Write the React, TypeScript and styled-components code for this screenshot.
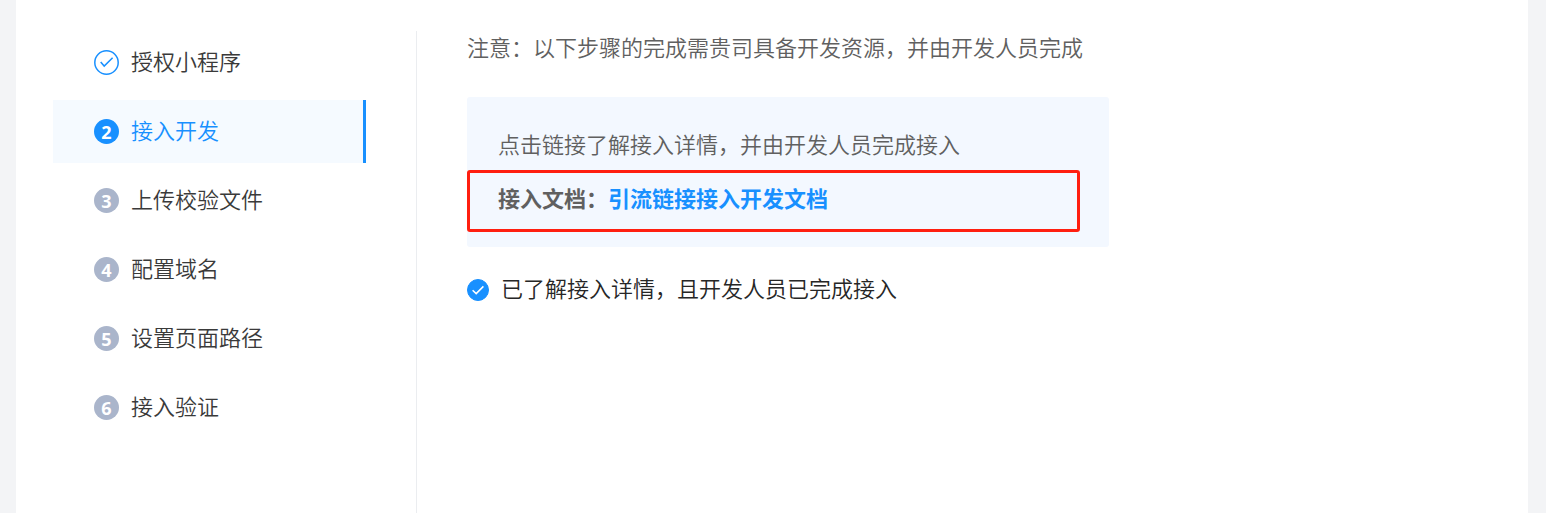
import React, { useState } from 'react';
import styled, { createGlobalStyle } from 'styled-components';

const blue = '#1890ff';

const GlobalStyle = createGlobalStyle`
  *, *::before, *::after { box-sizing: border-box; }
  body {
    margin: 0;
    background: #f3f4f6;
    font-family: "Liberation Sans", "Noto Sans CJK SC", sans-serif;
    font-size: 22px;
    font-weight: 350;
    line-height: 32px;
    color: #333;
  }
`;

const Panel = styled.div`
  display: flex;
  align-items: stretch;
  min-height: 100vh;
  margin: 0 18px 0 16px;
  padding-top: 31px;
  background: #fff;
`;

const Sidebar = styled.nav`
  flex: none;
  width: 401px;
  padding: 0 50px 0 37px;
  border-right: 1px solid #ebedf0;
`;

const StepList = styled.ol`
  display: flex;
  flex-direction: column;
  gap: 6px;
  margin: 0;
  padding: 0;
  list-style: none;
`;

const StepButton = styled.button<{ $active: boolean }>`
  display: flex;
  align-items: center;
  gap: 12px;
  width: 100%;
  height: 63px;
  padding: 0 0 0 41px;
  border: 0;
  border-right: 3px solid ${(p) => (p.$active ? blue : 'transparent')};
  background: ${(p) => (p.$active ? '#f5faff' : 'transparent')};
  color: ${(p) => (p.$active ? blue : '#3a3a3a')};
  font: inherit;
  text-align: left;
  cursor: pointer;
`;

const StepNumber = styled.span<{ $active: boolean }>`
  display: flex;
  align-items: center;
  justify-content: center;
  width: 25px;
  height: 25px;
  padding-top: 1px;
  border-radius: 50%;
  background: ${(p) => (p.$active ? blue : '#aab5cb')};
  color: #fff;
  font-family: "Open Sans", sans-serif;
  font-size: 18px;
  font-weight: 700;
  line-height: 24px;
`;

const Content = styled.main`
  flex: 1;
  min-width: 0;
  padding: 0 50px 40px;
`;

const Notice = styled.p`
  margin: 2px 0 32px;
  color: #606060;
`;

const InfoBox = styled.section`
  max-width: 642px;
  padding: 33px 0 15px;
  border-radius: 3px;
  background: #f3f8ff;
  color: #606060;
`;

const InfoText = styled.p`
  margin: 0 0 8px;
  padding: 0 31px;
`;

const DocRow = styled.p`
  margin: 0 29px 0 0;
  padding: 11px 28px 13px;
  border: 3px solid #ff1f10;
  border-radius: 3px;
  font-weight: 700;
`;

const DocLink = styled.a`
  color: ${blue};
  text-decoration: none;
`;

const Confirm = styled.label`
  display: inline-flex;
  align-items: center;
  gap: 12px;
  margin-top: 27px;
  color: #262626;
  cursor: pointer;
`;

const TickBox = styled.span`
  display: grid;
  width: 22px;
  height: 22px;

  > * { grid-area: 1 / 1; }
  > svg { pointer-events: none; }
`;

const Tick = styled.input`
  appearance: none;
  width: 22px;
  height: 22px;
  margin: 0;
  border: 1px solid #aab5cb;
  border-radius: 50%;
  background: #fff;
  cursor: pointer;

  &:checked {
    border-color: ${blue};
    background: ${blue};
  }
`;

const steps = ['授权小程序', '接入开发', '上传校验文件', '配置域名', '设置页面路径', '接入验证'];

const DoneIcon = () => (
  <svg width="25" height="25" viewBox="0 0 25 25" fill="none" stroke={blue} strokeWidth="1.5" aria-hidden="true">
    <circle cx="12.5" cy="12.5" r="11.7" />
    <path d="M6.7 11.9 L10.2 16.1 L18.6 7.7" />
  </svg>
);

export default function App() {
  const [current, setCurrent] = useState(1);
  const [confirmed, setConfirmed] = useState(true);

  return (
    <>
      <GlobalStyle />
      <Panel>
        <Sidebar>
          <StepList>
            {steps.map((name, i) => (
              <li key={name}>
                <StepButton
                  type="button"
                  $active={i === current}
                  aria-current={i === current ? 'step' : undefined}
                  onClick={() => setCurrent(i)}
                >
                  {i < current ? <DoneIcon /> : <StepNumber $active={i === current}>{i + 1}</StepNumber>}
                  {name}
                </StepButton>
              </li>
            ))}
          </StepList>
        </Sidebar>
        <Content>
          <Notice>注意：以下步骤的完成需贵司具备开发资源，并由开发人员完成</Notice>
          <InfoBox>
            <InfoText>点击链接了解接入详情，并由开发人员完成接入</InfoText>
            <DocRow>
              接入文档：<DocLink href="#doc">引流链接接入开发文档</DocLink>
            </DocRow>
          </InfoBox>
          <Confirm>
            <TickBox>
              <Tick type="checkbox" checked={confirmed} onChange={(e) => setConfirmed(e.target.checked)} />
              <svg width="22" height="22" viewBox="0 0 22 22" fill="none" stroke="#fff" strokeWidth="1.5" aria-hidden="true">
                <path d="M5.6 11.2 L9.2 14.6 L16.4 7.4" />
              </svg>
            </TickBox>
            已了解接入详情，且开发人员已完成接入
          </Confirm>
        </Content>
      </Panel>
    </>
  );
}
